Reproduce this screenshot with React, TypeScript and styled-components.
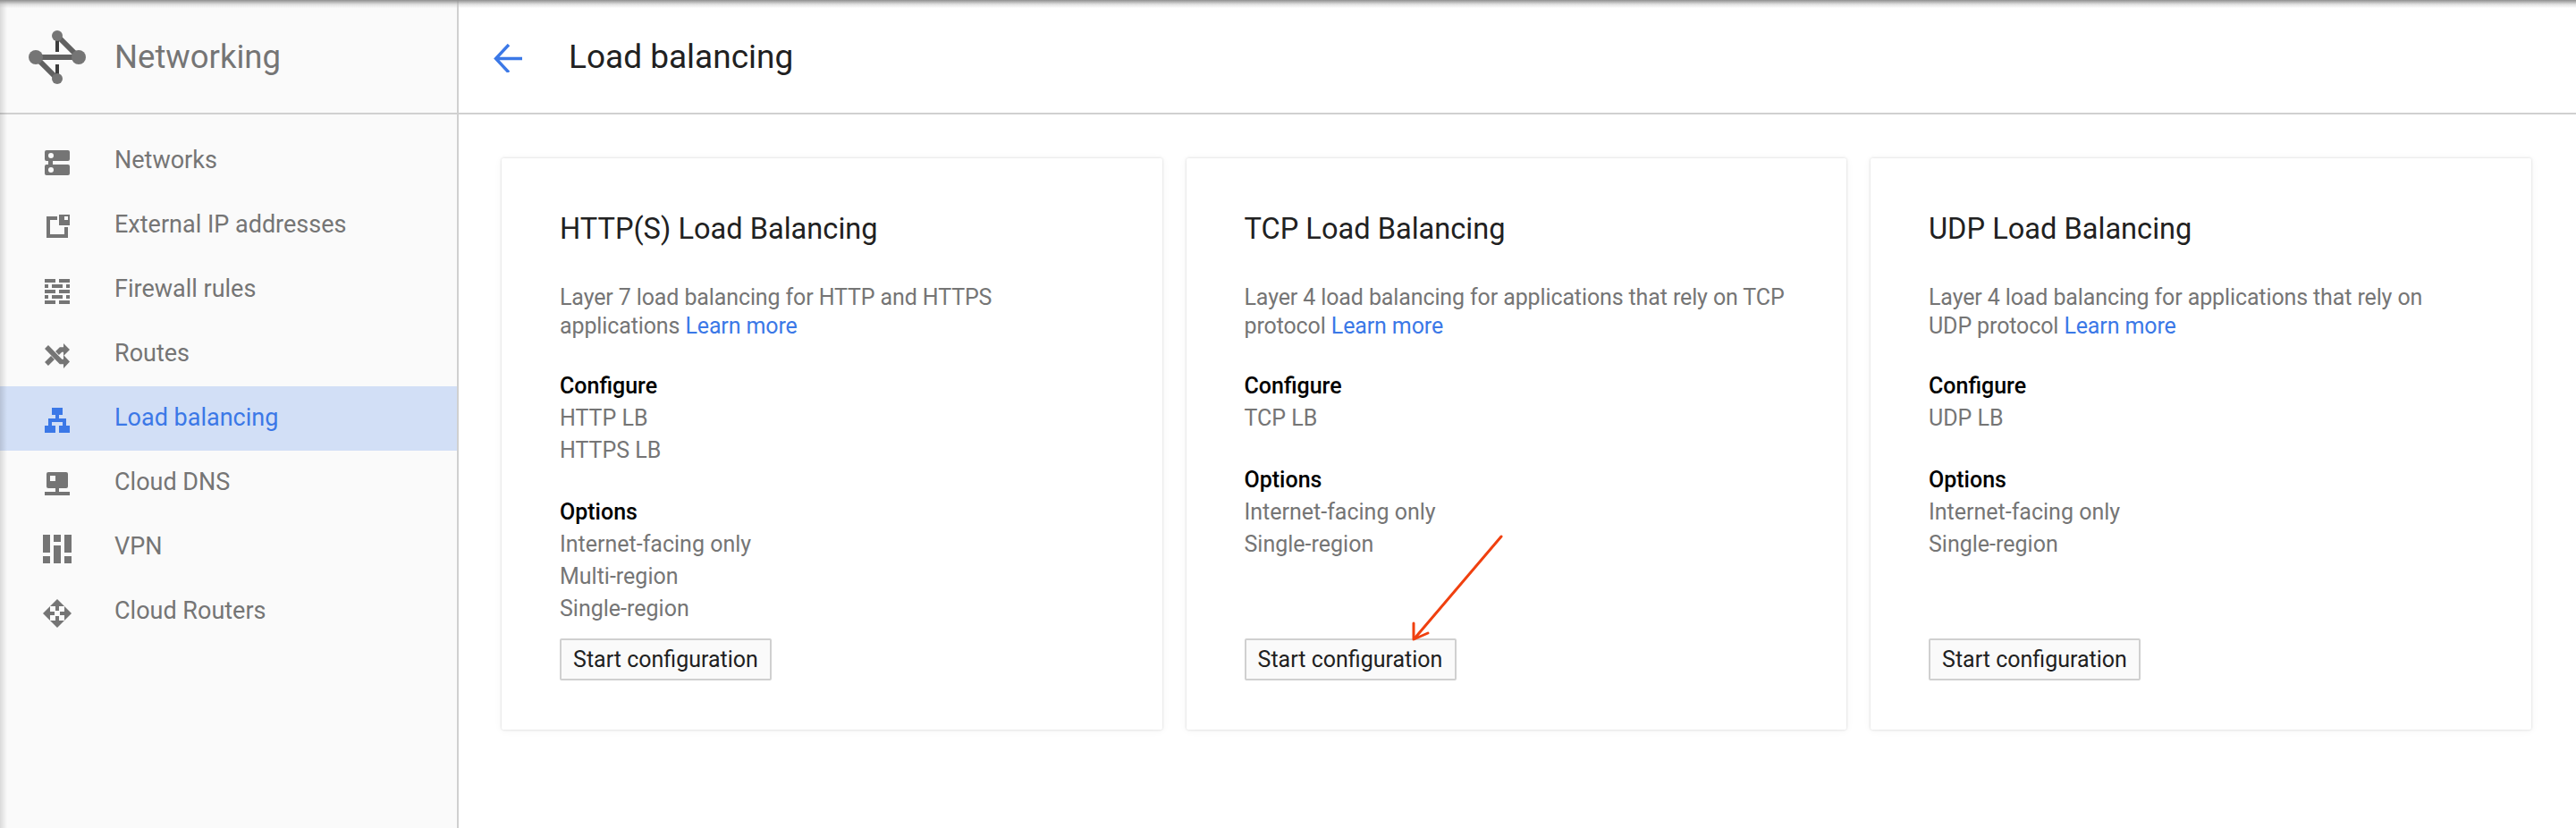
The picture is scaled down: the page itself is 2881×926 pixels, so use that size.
import React from 'react';
import styled, { createGlobalStyle } from 'styled-components';

const GlobalStyle = createGlobalStyle`
  html, body {
    margin: 0;
    height: 100%;
    background: #fff;
    font-family: Roboto, "Liberation Sans", sans-serif;
  }
  * { box-sizing: border-box; }
`;

const NetworkingLogo = () => (
  <svg width="128" height="128" viewBox="0 0 128 128">
    <path d="M64 40 88 64H40L64 88" fill="none" stroke="#616161" strokeWidth="6" />
    <path d="M64 42V58M64 72V86" stroke="#3c3c3c" strokeWidth="4" />
    <circle cx="40" cy="64" r="8" fill="#757575" />
    <circle cx="88" cy="64" r="8" fill="#757575" />
    <circle cx="64" cy="40" r="6" fill="#757575" />
    <circle cx="64" cy="88" r="6" fill="#757575" />
  </svg>
);

const NetworksIcon = () => (
  <svg width="28" height="28" viewBox="0 0 28 28" fill="currentColor">
    <path fillRule="evenodd" d="M2 0H26Q28 0 28 2V10Q28 12 26 12H2Q0 12 0 10V2Q0 0 2 0ZM7 3A3 3 0 1 0 7 9 3 3 0 1 0 7 3Z" />
    <path fillRule="evenodd" d="M2 16H26Q28 16 28 18V26Q28 28 26 28H2Q0 28 0 26V18Q0 16 2 16ZM7 19A3 3 0 1 0 7 25 3 3 0 1 0 7 19Z" />
    <path d="M4 12H9V16H4Z" />
  </svg>
);

const ExternalIpIcon = () => (
  <svg width="28" height="28" viewBox="0 0 28 28" fill="currentColor">
    <path d="M2 2H14V6H6V22H22V14H26V26H2Z" />
    <path fillRule="evenodd" d="M16 0H28V12H16ZM22 2V6H26V2Z" />
  </svg>
);

const FirewallIcon = () => (
  <svg width="28" height="28" viewBox="0 0 28 28" fill="currentColor">
    <path d="M0 0H12V4H0ZM16 0H28V4H16ZM0 6H4V10H0ZM8 6H20V10H8ZM24 6H28V10H24ZM0 12H12V16H0ZM16 12H28V16H16ZM0 18H4V22H0ZM8 18H20V22H8ZM24 18H28V22H24ZM0 24H12V28H0ZM16 24H28V28H16Z" />
  </svg>
);

const RoutesIcon = () => (
  <svg width="28" height="28" viewBox="0 0 28 28" fill="currentColor">
    <path d="M2 4 18 20.5H23M2 23 9 16M14 11 18 7H23" fill="none" stroke="currentColor" strokeWidth="5.5" />
    <path d="M21 0 28 7 21 14ZM21 13 28 20.5 21 28Z" />
  </svg>
);

const LoadBalancingIcon = () => (
  <svg width="28" height="28" viewBox="0 0 28 28" fill="currentColor">
    <path d="M8 0H20V8H16V12H24V20H28V28H16V20H20V16H8V20H12V28H0V20H4V12H12V8H8Z" />
  </svg>
);

const CloudDnsIcon = () => (
  <svg width="28" height="28" viewBox="0 0 28 28" fill="currentColor">
    <path fillRule="evenodd" d="M4 0H24Q26 0 26 2V16Q26 18 24 18H16V22H28V26H0V22H12V18H4Q2 18 2 16V2Q2 0 4 0ZM6 4V10H12V4Z" />
  </svg>
);

const VpnIcon = () => (
  <svg width="32" height="32" viewBox="0 0 32 32" fill="currentColor">
    <path d="M0 0H8V20H0ZM12 0H20V8H12ZM24 0H32V20H24ZM12 12H20V32H12ZM0 24H8V32H0ZM24 24H32V32H24Z" />
  </svg>
);

const RoutersIcon = () => (
  <svg width="32" height="32" viewBox="0 0 32 32" fill="currentColor">
    <path d="M16 0 24 8H18V13H14V8H8ZM16 32 8 24H14V19H18V24H24ZM0 16 8 8V14H13V18H8V24ZM32 16 24 24V18H19V14H24V8Z" />
  </svg>
);

const navItems = [
  { label: 'Networks', icon: <NetworksIcon /> },
  { label: 'External IP addresses', icon: <ExternalIpIcon /> },
  { label: 'Firewall rules', icon: <FirewallIcon /> },
  { label: 'Routes', icon: <RoutesIcon /> },
  { label: 'Load balancing', icon: <LoadBalancingIcon />, active: true },
  { label: 'Cloud DNS', icon: <CloudDnsIcon /> },
  { label: 'VPN', icon: <VpnIcon /> },
  { label: 'Cloud Routers', icon: <RoutersIcon /> },
];

const cards = [
  {
    title: 'HTTP(S) Load Balancing',
    description: 'Layer 7 load balancing for HTTP and HTTPS applications',
    configure: ['HTTP LB', 'HTTPS LB'],
    options: ['Internet-facing only', 'Multi-region', 'Single-region'],
  },
  {
    title: 'TCP Load Balancing',
    description: 'Layer 4 load balancing for applications that rely on TCP protocol',
    configure: ['TCP LB'],
    options: ['Internet-facing only', 'Single-region'],
    annotated: true,
  },
  {
    title: 'UDP Load Balancing',
    description: 'Layer 4 load balancing for applications that rely on UDP protocol',
    configure: ['UDP LB'],
    options: ['Internet-facing only', 'Single-region'],
    narrow: true,
  },
];

const App: React.FC = () => (
  <Shell>
    <GlobalStyle />
    <Sidebar>
      <Brand>
        <LogoSlot><NetworkingLogo /></LogoSlot>
        <BrandName>Networking</BrandName>
      </Brand>
      <Nav>
        {navItems.map((item) => (
          <NavRow key={item.label} $active={item.active}>
            <NavIcon>{item.icon}</NavIcon>
            <NavLabel>{item.label}</NavLabel>
          </NavRow>
        ))}
      </Nav>
    </Sidebar>
    <Main>
      <PageHeader>
        <BackButton aria-label="Back">
          <svg width="32" height="32" viewBox="0 0 32 32" fill="none" stroke="#3b78e7" strokeWidth="3.4">
            <path d="M32 16.5H3M17 1 2.5 16.5 17 32" />
          </svg>
        </BackButton>
        <PageTitle>Load balancing</PageTitle>
      </PageHeader>
      <CardGrid>
        {cards.map((card) => (
          <Card key={card.title}>
            <CardTitle>{card.title}</CardTitle>
            <Description $narrow={card.narrow}>
              {card.description} <LearnMore href="#">Learn more</LearnMore>
            </Description>
            <Section>
              <SectionHeading>Configure</SectionHeading>
              {card.configure.map((line) => <SectionLine key={line}>{line}</SectionLine>)}
            </Section>
            <Section>
              <SectionHeading>Options</SectionHeading>
              {card.options.map((line) => <SectionLine key={line}>{line}</SectionLine>)}
            </Section>
            <StartButton>
              Start configuration
              {card.annotated && (
                <Annotation width="104" height="122" viewBox="0 0 104 122" fill="none" stroke="#f0400f">
                  <path d="M101 2 4 116" strokeWidth="3" strokeLinecap="round" />
                  <path d="M3 99 3 117 19 110" strokeWidth="3" strokeLinecap="round" strokeLinejoin="round" />
                </Annotation>
              )}
            </StartButton>
          </Card>
        ))}
      </CardGrid>
    </Main>
    <TopShade />
  </Shell>
);

const Shell = styled.div`
  position: relative;
  display: flex;
  height: 926px;
  overflow: hidden;
`;

const TopShade = styled.div`
  position: absolute;
  top: 0;
  left: 0;
  right: 0;
  height: 9px;
  background: linear-gradient(#8f8f8f, rgba(190, 190, 190, 0.45) 55%, rgba(255, 255, 255, 0));
  pointer-events: none;
`;

const Sidebar = styled.aside`
  position: relative;
  flex: 0 0 513px;
  background: #fafafa;
  border-right: 2px solid #d0d0d0;

  &::before {
    content: '';
    position: absolute;
    top: 0;
    bottom: 0;
    left: 0;
    width: 8px;
    background: linear-gradient(90deg, rgba(0, 0, 0, 0.13), rgba(0, 0, 0, 0));
    pointer-events: none;
  }
`;

const Brand = styled.div`
  display: flex;
  align-items: center;
  height: 128px;
  border-bottom: 2px solid #d0d0d0;
`;

const LogoSlot = styled.div`
  display: flex;
  flex: 0 0 128px;
  margin-top: 2px;
`;

const BrandName = styled.div`
  font-size: 36.5px;
  color: #757575;
`;

const Nav = styled.nav`
  padding-top: 16px;
`;

const NavRow = styled.div<{ $active?: boolean }>`
  display: flex;
  align-items: center;
  height: 72px;
  background: ${({ $active }) => ($active ? '#d2dff6' : 'transparent')};
  color: ${({ $active }) => ($active ? '#3b78e7' : '#757575')};
`;

const NavIcon = styled.div`
  display: flex;
  flex: 0 0 128px;
  justify-content: center;
  padding-top: 4px;
`;

const NavLabel = styled.div`
  font-size: 27px;
  margin-top: -3px;
`;

const Main = styled.main`
  flex: 1;
  min-width: 0;
`;

const PageHeader = styled.header`
  display: flex;
  align-items: center;
  height: 128px;
  border-bottom: 2px solid #d0d0d0;
`;

const BackButton = styled.button`
  display: flex;
  margin: 4px 0 0 39px;
  padding: 0;
  border: 0;
  background: none;
`;

const PageTitle = styled.h1`
  margin: 0 0 0 52px;
  font-size: 37px;
  font-weight: 400;
  color: #212121;
`;

const CardGrid = styled.div`
  display: grid;
  grid-template-columns: repeat(3, 738.5px);
  gap: 27px;
  padding: 49px 0 0 48px;
`;

const Card = styled.section`
  display: flex;
  flex-direction: column;
  height: 639px;
  padding: 57px 65px 55px;
  background: #fff;
  border-radius: 2px;
  box-shadow: 0 0 3px rgba(0, 0, 0, 0.16), 0 1px 10px rgba(0, 0, 0, 0.05);
`;

const CardTitle = styled.h2`
  margin: 0;
  font-size: 32.6px;
  font-weight: 400;
  line-height: 44px;
  color: #212121;
`;

const Description = styled.p<{ $narrow?: boolean }>`
  max-width: ${({ $narrow }) => ($narrow ? '585px' : 'none')};
  margin: 39px 0 0;
  font-size: 25px;
  letter-spacing: -0.12px;
  line-height: 32px;
  color: #757575;
`;

const LearnMore = styled.a`
  color: #3b78e7;
  text-decoration: none;
`;

const Section = styled.div`
  margin-top: 33px;
`;

const SectionHeading = styled.div`
  font-size: 25px;
  font-weight: 500;
  line-height: 36px;
  color: #000;
`;

const SectionLine = styled.div`
  font-size: 25px;
  line-height: 36px;
  color: #757575;
`;

const StartButton = styled.button`
  position: relative;
  align-self: flex-start;
  height: 47px;
  width: 237px;
  margin-top: auto;
  padding: 0;
  background: #fafafa;
  border: 2px solid #d0d0d0;
  border-radius: 2px;
  font-family: inherit;
  font-size: 25px;
  color: #212121;
`;

const Annotation = styled.svg`
  position: absolute;
  left: 184px;
  top: -118px;
  pointer-events: none;
`;

export default App;
